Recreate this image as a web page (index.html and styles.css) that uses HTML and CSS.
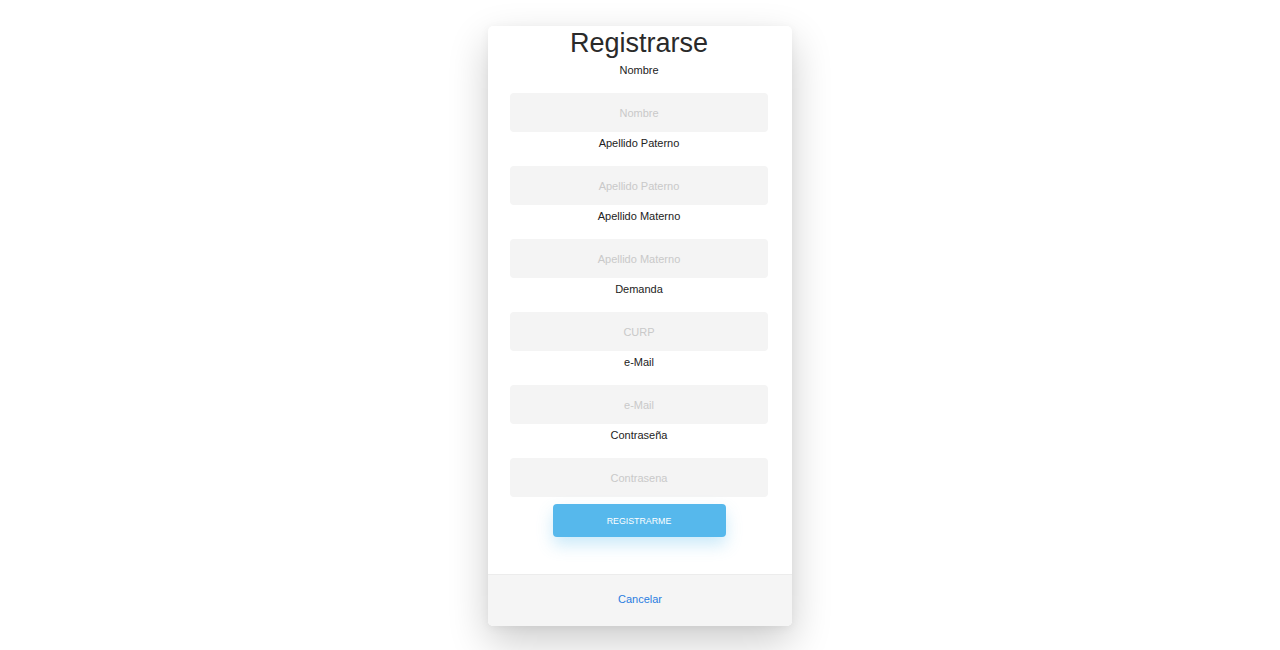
FILE: index.html
```html
<!DOCTYPE html>
<html lang="es">
<head>
<meta charset="utf-8">
<title>Registrarse</title>
<link rel="stylesheet" href="styles.css">
</head>
<body>
<div class="page">
  <div class="card">
    <div class="card-body">
      <h1 class="title">Registrarse</h1>
      <form class="form">
        <label class="label">Nombre</label>
        <input class="input" type="text" placeholder="Nombre">
        <label class="label">Apellido Paterno</label>
        <input class="input" type="text" placeholder="Apellido Paterno">
        <label class="label">Apellido Materno</label>
        <input class="input" type="text" placeholder="Apellido Materno">
        <label class="label">Demanda</label>
        <input class="input" type="text" placeholder="CURP">
        <label class="label">e-Mail</label>
        <input class="input" type="text" placeholder="e-Mail">
        <label class="label">Contraseña</label>
        <input class="input" type="password" placeholder="Contrasena">
        <button class="btn" type="button">REGISTRARME</button>
      </form>
    </div>
    <div class="card-footer">
      <a class="cancel" href="#">Cancelar</a>
    </div>
  </div>
</div>
</body>
</html>
```
FILE: styles.css
```css
* { box-sizing: border-box; }
html, body { margin: 0; padding: 0; background: #ffffff; }
html { height: 100%; }
body { min-height: 100%; font-family: "Liberation Sans", Arial, sans-serif; color: #222; }

.page {
  display: flex;
  justify-content: center;
  padding-top: 26px;
  padding-bottom: 24px;
  min-height: 650px;
}

.card {
  width: 304px;
  align-self: flex-start;
  background: #fff;
  border-radius: 5px;
  box-shadow: 0 16px 40px rgba(0, 0, 0, 0.2), 0 2px 10px rgba(0, 0, 0, 0.05);
  overflow: hidden;
}

.card-body {
  padding: 0 24px 37px 22px;
}

.title {
  margin: 0;
  padding-top: 2px;
  font-size: 27px;
  font-weight: normal;
  line-height: 31px;
  text-align: center;
  color: #2a2a2a;
}

.form {
  display: flex;
  flex-direction: column;
  align-items: stretch;
  padding-top: 4px;
}

.label {
  display: block;
  font-size: 11px;
  line-height: 14px;
  text-align: center;
  color: #222;
  margin-bottom: 16px;
}

.input {
  display: block;
  width: 100%;
  height: 39px;
  margin: 0 0 4px;
  border: none;
  border-radius: 4px;
  background: #f4f4f4;
  font-family: inherit;
  font-size: 11px;
  text-align: center;
  color: #333;
  outline: none;
}
.input::placeholder { color: #c9c9c9; }

.btn {
  align-self: center;
  width: 173px;
  height: 33px;
  margin-top: 3px;
  border: none;
  border-radius: 4px;
  background: #56b8ec;
  color: #fff;
  font-family: inherit;
  font-size: 8.8px;
  box-shadow: 0 8px 16px rgba(86, 184, 236, 0.3);
}

.card-footer {
  height: 52px;
  padding-bottom: 4px;
  background: #f5f5f5;
  border-top: 1px solid #ececec;
  display: flex;
  align-items: center;
  justify-content: center;
}

.cancel {
  font-size: 11px;
  color: #2b7de0;
  text-decoration: none;
}
```
